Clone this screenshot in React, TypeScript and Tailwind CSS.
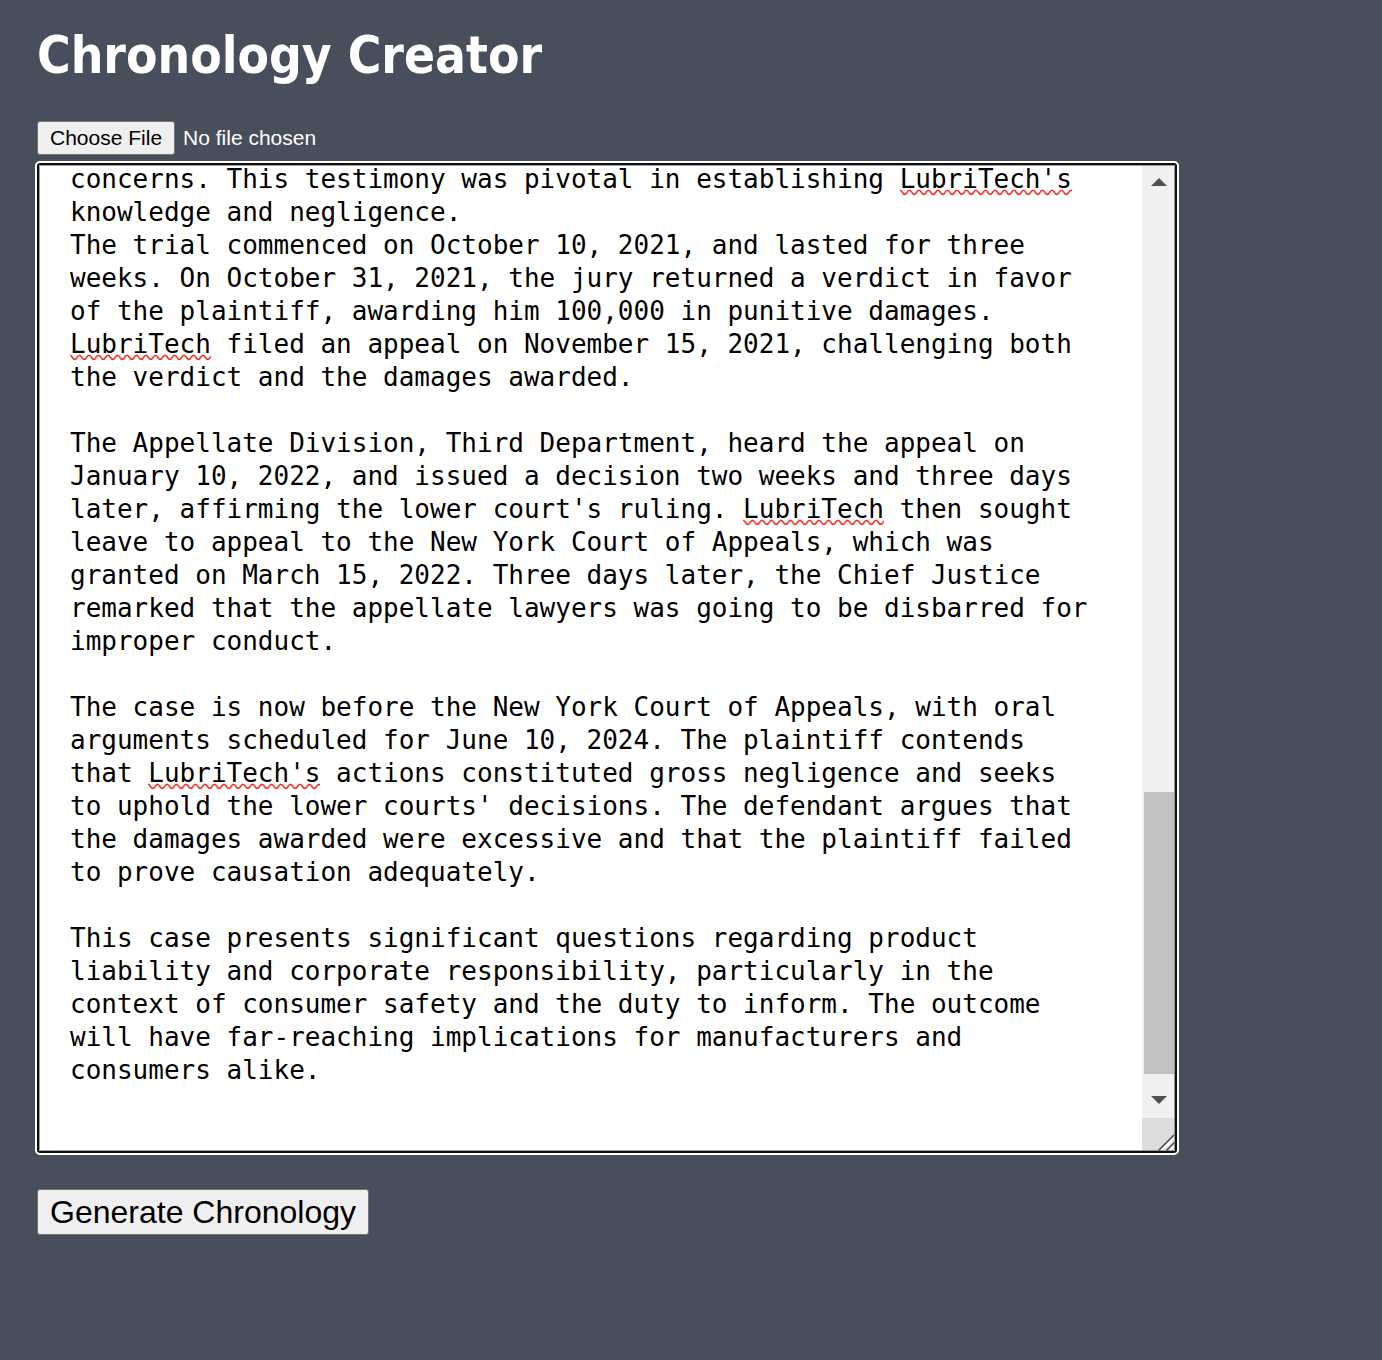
import { useLayoutEffect, useRef } from "react";

const CASE_TEXT = `concerns. This testimony was pivotal in establishing LubriTech's knowledge and negligence.
The trial commenced on October 10, 2021, and lasted for three weeks. On October 31, 2021, the jury returned a verdict in favor of the plaintiff, awarding him 100,000 in punitive damages. LubriTech filed an appeal on November 15, 2021, challenging both the verdict and the damages awarded.

The Appellate Division, Third Department, heard the appeal on January 10, 2022, and issued a decision two weeks and three days later, affirming the lower court's ruling. LubriTech then sought leave to appeal to the New York Court of Appeals, which was granted on March 15, 2022. Three days later, the Chief Justice remarked that the appellate lawyers was going to be disbarred for improper conduct.

The case is now before the New York Court of Appeals, with oral arguments scheduled for June 10, 2024. The plaintiff contends that LubriTech's actions constituted gross negligence and seeks to uphold the lower courts' decisions. The defendant argues that the damages awarded were excessive and that the plaintiff failed to prove causation adequately.

This case presents significant questions regarding product liability and corporate responsibility, particularly in the context of consumer safety and the duty to inform. The outcome will have far-reaching implications for manufacturers and consumers alike.
`;

const LINE_HEIGHT = 33;

// Flagged words, by line, column and length in characters.
const MISSPELLINGS = [
  { line: 0, column: 53, length: 11 },
  { line: 5, column: 0, length: 9 },
  { line: 10, column: 43, length: 9 },
  { line: 18, column: 5, length: 11 },
];

function Squiggle() {
  return (
    <svg className="block h-[7px] w-full" aria-hidden="true">
      <defs>
        <pattern id="wave" width="9.5" height="7" patternUnits="userSpaceOnUse">
          <path
            d="M-4.75 5.5 C-2.4 5.5 -2.4 1.2 0 1.2 S2.4 5.5 4.75 5.5 S7.1 1.2 9.5 1.2 S11.9 5.5 14.2 5.5"
            fill="none"
            stroke="#f0281e"
            strokeWidth="1.6"
          />
        </pattern>
      </defs>
      <rect width="100%" height="7" fill="url(#wave)" />
    </svg>
  );
}

function ScrollBar() {
  return (
    <div className="flex w-[33px] shrink-0 flex-col bg-[#f0f0f0]" aria-hidden="true">
      <div className="flex h-[33px] items-center justify-center">
        <svg width="16" height="8" viewBox="0 0 16 8">
          <path d="M0 8 8 0l8 8z" fill="#505050" />
        </svg>
      </div>
      <div className="flex flex-1 flex-col justify-end pr-px pl-[2px]">
        <div className="h-[282px] bg-[#c1c1c1]" />
      </div>
      <div className="flex h-[44px] justify-center pt-[22px]">
        <svg width="16" height="8" viewBox="0 0 16 8">
          <path d="M0 0h16L8 8z" fill="#505050" />
        </svg>
      </div>
      <div className="flex h-[33px] items-end justify-end bg-[#dcdcdc]">
        <svg width="17" height="17" viewBox="0 0 17 17" fill="none">
          <path d="M3 17 17 3M11 17l6-6" stroke="#fff" strokeWidth="2.5" />
          <path d="M.5 16.5 16 1M8.5 16.5l8-8" stroke="#484848" strokeWidth="1.5" />
        </svg>
      </div>
    </div>
  );
}

function DocumentEditor() {
  const area = useRef<HTMLTextAreaElement>(null);

  useLayoutEffect(() => {
    if (area.current) area.current.scrollTop = area.current.scrollHeight;
  }, []);

  return (
    <div className="relative flex w-full max-w-[1140px] overflow-hidden rounded-[3px] border-2 border-[#101010] bg-white outline-2 outline-white">
      <div className="relative min-w-0 flex-1 overflow-hidden font-['DejaVu_Sans_Mono',monospace] text-[26px] leading-[33px]">
        <textarea
          ref={area}
          aria-label="Case text"
          rows={28}
          spellCheck={false}
          defaultValue={CASE_TEXT}
          className="block w-full resize-none bg-white py-[31px] pr-[47px] pl-[31px] text-black outline-none [scrollbar-width:none]"
        />
        <div className="pointer-events-none absolute -top-[2px] left-[31px]">
          {MISSPELLINGS.map(({ line, column, length }) => (
            <div
              key={line}
              className="absolute"
              style={{ top: line * LINE_HEIGHT + 26, left: `${column}ch`, width: `${length}ch` }}
            >
              <Squiggle />
            </div>
          ))}
        </div>
      </div>
      <ScrollBar />
      <div className="pointer-events-none absolute inset-0 border border-[#767676]/70" />
    </div>
  );
}

export default function App() {
  return (
    <main className="flex min-h-screen flex-col items-start bg-[#484f5c] px-[37px] pt-6 pb-8 font-['Liberation_Sans',Arial,sans-serif]">
      <h1 className="font-['DejaVu_Sans_Condensed','Noto_Sans',sans-serif] text-[51px] leading-[64px] font-bold text-white">
        Chronology Creator
      </h1>
      <input
        type="file"
        aria-label="Case document"
        className="mt-[33px] block h-[34px] text-[21px] leading-[30px] text-white file:mr-2 file:h-[34px] file:rounded-[3px] file:border file:border-solid file:border-[#767676] file:bg-[#efefef] file:px-3 file:text-[21px] file:leading-[30px] file:text-black"
      />
      <div className="mt-2 w-full">
        <DocumentEditor />
      </div>
      <button
        type="button"
        className="mt-9 h-[46px] rounded-[3px] border border-[#767676] bg-[#efefef] px-3 text-[32px] leading-[44px] text-black"
      >
        Generate Chronology
      </button>
    </main>
  );
}
